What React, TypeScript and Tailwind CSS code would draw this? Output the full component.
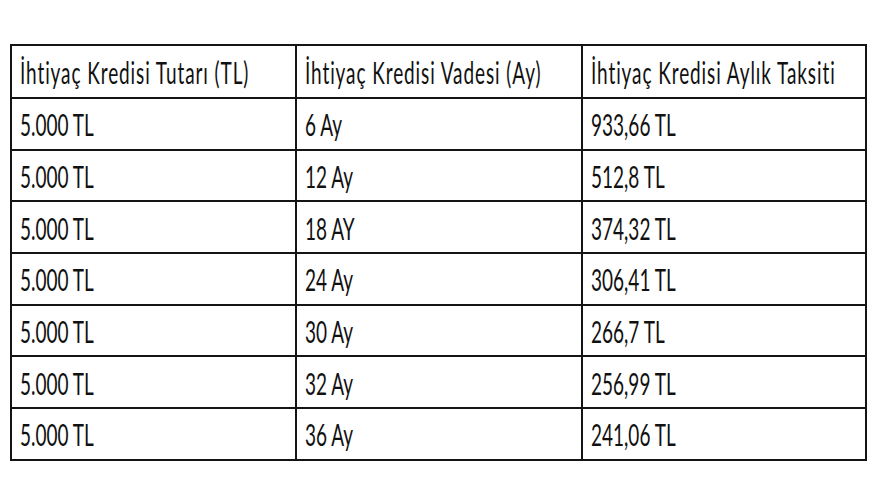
const header = [
  "İhtiyaç Kredisi Tutarı (TL)",
  "İhtiyaç Kredisi Vadesi (Ay)",
  "İhtiyaç Kredisi Aylık Taksiti",
];

const rows: Array<[string, string, string]> = [
  ["5.000 TL", "6 Ay", "933,66 TL"],
  ["5.000 TL", "12 Ay", "512,8 TL"],
  ["5.000 TL", "18 AY", "374,32 TL"],
  ["5.000 TL", "24 Ay", "306,41 TL"],
  ["5.000 TL", "30 Ay", "266,7 TL"],
  ["5.000 TL", "32 Ay", "256,99 TL"],
  ["5.000 TL", "36 Ay", "241,06 TL"],
];

function CellText({ children }: { children: string }) {
  return (
    <span className="inline-block origin-left scale-y-[1.65] whitespace-pre">
      {children}
    </span>
  );
}

export default function App() {
  return (
    <div className="h-[495px] w-[880px] bg-white pl-[10px] pt-[44px] font-['Lato',sans-serif] text-[19px] leading-none text-[#111]">
      <table className="w-[855px] table-fixed border-collapse border-2 border-[#141414]">
        <colgroup>
          <col className="w-[285px]" />
          <col className="w-[286px]" />
          <col className="w-[284px]" />
        </colgroup>
        <thead>
          <tr className="h-[53px]">
            {header.map((h) => (
              <th
                key={h}
                className="border-2 border-[#141414] pl-[8px] text-left align-middle font-normal tracking-[0.9px]"
              >
                <CellText>{h}</CellText>
              </th>
            ))}
          </tr>
        </thead>
        <tbody>
          {rows.map((r, i) => (
            <tr key={i} className="h-[51.7px]">
              {r.map((c, j) => (
                <td
                  key={j}
                  className="border-2 border-[#141414] pl-[8px] align-middle"
                >
                  <CellText>{c}</CellText>
                </td>
              ))}
            </tr>
          ))}
        </tbody>
      </table>
    </div>
  );
}
